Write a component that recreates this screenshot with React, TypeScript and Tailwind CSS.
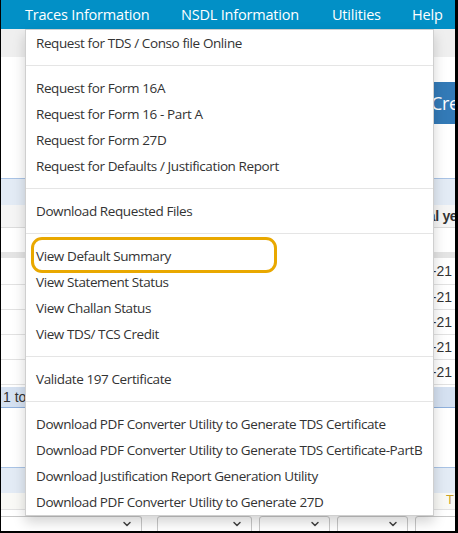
import { ChevronDown } from 'lucide-react'

const menuGroups: string[][] = [
  ['Request for TDS / Conso file Online'],
  [
    'Request for Form 16A',
    'Request for Form 16 - Part A',
    'Request for Form 27D',
    'Request for Defaults / Justification Report',
  ],
  ['Download Requested Files'],
  ['View Default Summary', 'View Statement Status', 'View Challan Status', 'View TDS/ TCS Credit'],
  ['Validate 197 Certificate'],
  [
    'Download PDF Converter Utility to Generate TDS Certificate',
    'Download PDF Converter Utility to Generate TDS Certificate-PartB',
    'Download Justification Report Generation Utility',
    'Download PDF Converter Utility to Generate 27D',
  ],
]

const highlighted = 'View Default Summary'

const selectBoxes = [
  'w-[141px] rounded-l-none border-l-0',
  'ml-[15px] w-[95px]',
  'ml-[7px] w-[71px]',
  'ml-[7px] w-[71px]',
  'ml-[7px] w-[60px]',
]

function NavBar() {
  return (
    <nav className="flex h-[29px] items-center bg-[#0290c6] pl-[24px] pt-px font-['Open_Sans',sans-serif] text-[14.5px] tracking-[-0.2px] text-white">
      <span className="w-[156px]">Traces Information</span>
      <span className="w-[151px]">NSDL Information</span>
      <span className="w-[80px]">Utilities</span>
      <span>Help</span>
    </nav>
  )
}

function PageBehind() {
  return (
    <div className="font-['Liberation_Sans',Arial,sans-serif] text-sm text-[#333]">
      <div className="h-[28px] bg-[#efefef]" />
      <div className="h-[121px] pt-[25px]">
        <button
          type="button"
          className="ml-[420px] h-[42px] whitespace-nowrap rounded bg-[#337ab7] pl-[10px] pr-4 font-['Open_Sans',sans-serif] text-lg tracking-[-0.4px] text-white"
        >
          Create Request
        </button>
      </div>
      <div className="h-[27px] border-t border-[#a9c3e5] bg-[#e3ebf5]" />
      <div className="flex h-[23px] items-center justify-end border-b border-[#dcdcdc] bg-[#f5f5f5] font-bold tracking-[-0.3px]">
        <span className="mr-[-15px] whitespace-nowrap">Financial year</span>
      </div>
      <div className="h-[24px]" />
      <div className="h-[6px] bg-[#e4e4e4]" />
      {[27, 25, 25, 25, 25].map((h, i) => (
        <div
          key={i}
          className={`flex items-center justify-end border-b border-[#e2e2e2] pr-[3px] ${h === 27 ? 'h-[27px]' : 'h-[25px]'}`}
        >
          2020-21
        </div>
      ))}
      <div className="mt-[2px] flex h-[21px] items-center border-b border-[#8fb0dc] bg-[#d5e1f1] pl-[2px]">1 to 5 of 5</div>
      <div className="h-[59px]" />
      <div className="h-[26px] border-t border-[#a9c3e5] bg-[#e3ebf5]" />
      <div className="flex h-[17px] items-start justify-end border-b border-[#e2e2e2] bg-[#f9f9f6] pr-px text-[13px] leading-none text-[#c9a227]">
        T
      </div>
      <div className="h-[6px]" />
      <div className="flex">
        {selectBoxes.map((cls, i) => (
          <div
            key={i}
            className={`${cls} flex h-[20px] shrink-0 items-start justify-end rounded-[3px] border border-[#c8c8c8] bg-white pr-[8px] pt-[1px]`}
          >
            <ChevronDown size={12} strokeWidth={3} className="text-[#444]" />
          </div>
        ))}
      </div>
    </div>
  )
}

function TracesDropdown() {
  return (
    <div className="absolute left-[24px] top-[29px] w-[409px] border border-[#cfcfcf] bg-white font-['Open_Sans',sans-serif] text-[13.5px] text-[#333] shadow-[0_6px_12px_rgba(0,0,0,0.175)]">
      {menuGroups.map((group, gi) => (
        <div key={gi}>
          {gi > 0 && <div className="my-[9px] h-px bg-[#e5e5e5]" />}
          {group.map((item) => (
            <div key={item} className="relative flex h-[26px] items-center whitespace-nowrap pl-[10px] tracking-[-0.4px]">
              {item}
              {item === highlighted && (
                <span className="absolute left-[5px] top-[-6px] h-[36px] w-[246px] rounded-[11px] border-[3px] border-[#e9a800]" />
              )}
            </div>
          ))}
        </div>
      ))}
    </div>
  )
}

export default function App() {
  return (
    <div className="h-[533px] w-[458px] overflow-hidden bg-black pb-[2px] pl-px pr-[3px]">
      <div className="relative h-full overflow-hidden bg-white">
        <NavBar />
        <PageBehind />
        <TracesDropdown />
      </div>
    </div>
  )
}
